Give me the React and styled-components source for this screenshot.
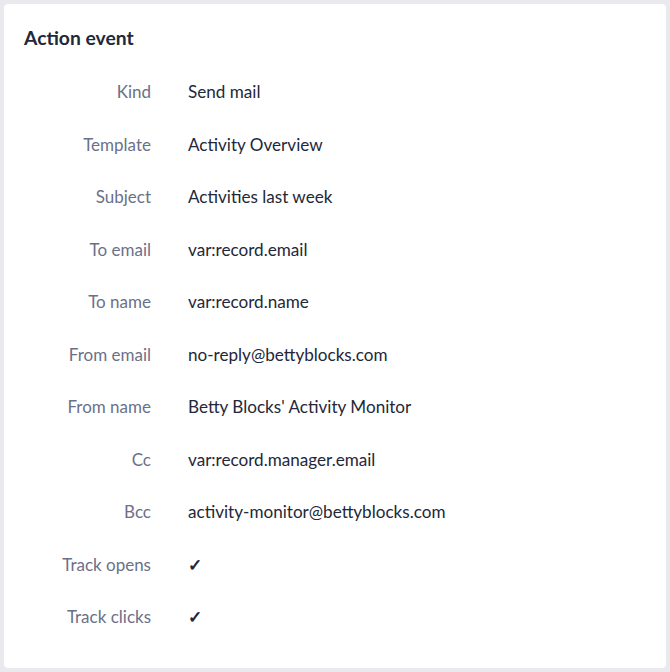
import styled, { createGlobalStyle } from 'styled-components';

const GlobalStyle = createGlobalStyle`
  html, body {
    margin: 0;
    padding: 0;
    background: #e9e9ee;
  }
  body {
    padding: 4px;
    font-family: Lato, "Open Sans", sans-serif;
  }
`;

const Card = styled.div`
  box-sizing: border-box;
  width: 662px;
  height: 664px;
  background: #ffffff;
  border-radius: 4px;
  padding: 22px 20px 20px;
`;

const Title = styled.h2`
  margin: 0 0 30px;
  font-size: 19.3px;
  font-weight: 700;
  color: #232839;
  line-height: 24px;
`;

const Fields = styled.dl`
  margin: 0;
  display: grid;
  grid-template-columns: 127px 1fr;
  column-gap: 37px;
  grid-auto-rows: 52.5px;
`;

const Label = styled.dt`
  margin: 0;
  text-align: right;
  font-size: 17px;
  line-height: 24px;
  color: #6b7089;
`;

const Value = styled.dd`
  margin: 0;
  font-size: 17.1px;
  line-height: 24px;
  color: #232839;
  font-weight: ${(props) => (props.$check ? 700 : 400)};
`;

const fields = [
  ['Kind', 'Send mail'],
  ['Template', 'Activity Overview'],
  ['Subject', 'Activities last week'],
  ['To email', 'var:record.email'],
  ['To name', 'var:record.name'],
  ['From email', 'no-reply@bettyblocks.com'],
  ['From name', "Betty Blocks' Activity Monitor"],
  ['Cc', 'var:record.manager.email'],
  ['Bcc', 'activity-monitor@bettyblocks.com'],
  ['Track opens', '✓'],
  ['Track clicks', '✓'],
];

export default function App() {
  return (
    <>
      <GlobalStyle />
      <Card>
        <Title>Action event</Title>
        <Fields>
          {fields.map(([label, value]) => [
            <Label key={label}>{label}</Label>,
            <Value key={label + '-v'} $check={value === '✓'}>
              {value}
            </Value>,
          ])}
        </Fields>
      </Card>
    </>
  );
}
